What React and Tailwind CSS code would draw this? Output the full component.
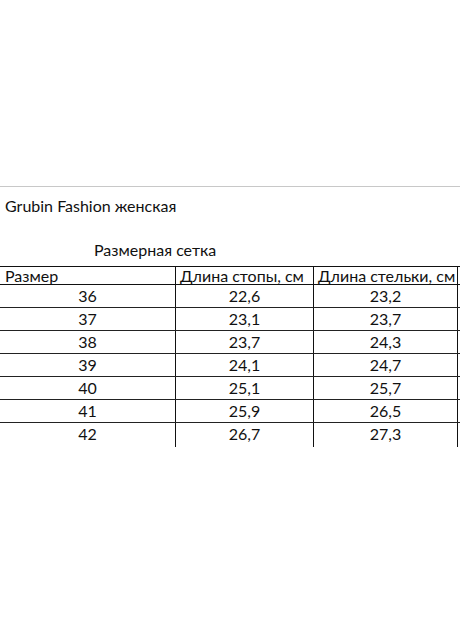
export default function App() {
  const rows = [
    ["36", "22,6", "23,2"],
    ["37", "23,1", "23,7"],
    ["38", "23,7", "24,3"],
    ["39", "24,1", "24,7"],
    ["40", "25,1", "25,7"],
    ["41", "25,9", "26,5"],
    ["42", "26,7", "27,3"],
  ];
  return (
    <div
      className="w-[460px] h-[640px] bg-white text-[#111] text-[16px] overflow-hidden"
      style={{ fontFamily: "Lato, 'Noto Sans', sans-serif" }}
    >
      <div className="h-[186px]" />
      <div className="h-[80px] border-t border-[#c8c8c8]">
        <div className="h-[38px] pl-[5px] pt-[9px] leading-[20px]">Grubin Fashion женская</div>
        <div className="h-[41px] pl-[94px] pt-[15px] leading-[20px]">Размерная сетка</div>
      </div>
      <div className="w-[460px]">
        <div className="grid grid-cols-[175px_138px_144px_3px] h-[19px] border-t border-b border-[#111] leading-[17px]">
          <div className="pl-[5px]">Размер</div>
          <div className="border-l border-[#111] pl-[4px]">Длина стопы, см</div>
          <div className="border-l border-[#111] pl-[4px]">Длина стельки, см</div>
          <div className="border-l border-[#111]" />
        </div>
        {rows.map((r, i) => (
          <div
            key={r[0]}
            className={
              "grid grid-cols-[175px_138px_144px_3px] h-[23px] leading-[22px] " +
              (i < rows.length - 1 ? "border-b border-[#222]" : "h-[24px]")
            }
          >
            <div className="text-center">{r[0]}</div>
            <div className="border-l border-[#111] text-center">{r[1]}</div>
            <div className="border-l border-[#111] text-center">{r[2]}</div>
            <div className="border-l border-[#111]" />
          </div>
        ))}
      </div>
    </div>
  );
}
